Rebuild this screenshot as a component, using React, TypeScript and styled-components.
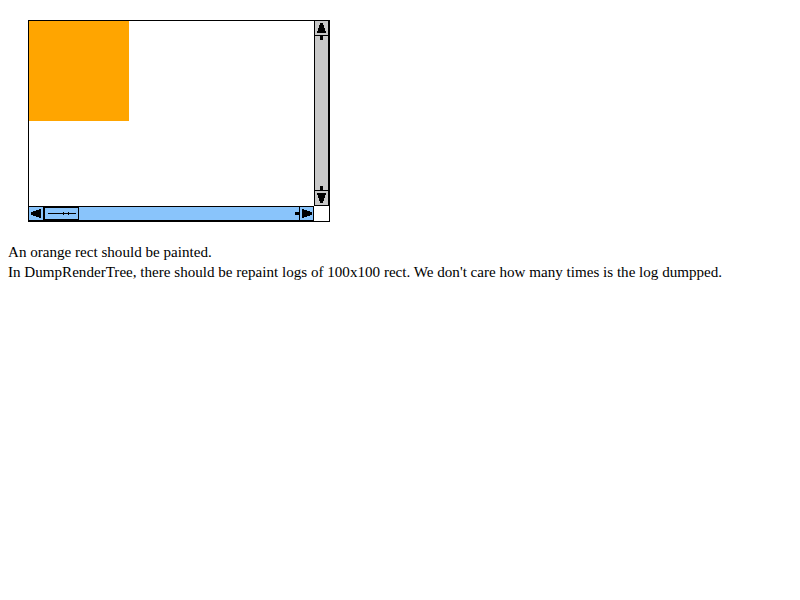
import React from 'react';
import styled, { createGlobalStyle } from 'styled-components';

const GlobalStyle = createGlobalStyle`
  body {
    margin: 0 8px 8px;
    background: #fff;
    font-family: 'Liberation Serif', 'Times New Roman', serif;
    font-size: 15.1px;
    color: #000;
  }
`;

const GREY = '#c8c8c8';
const BLUE = '#89c4fb';

const Frame = styled.div`
  display: grid;
  grid-template-columns: 285px 15px;
  grid-template-rows: 185px 15px;
  width: 300px;
  border: 1px solid #000;
  margin: 20px;
  background: #fff;
`;

const Viewport = styled.div`
  background: #fff;
  overflow: hidden;
`;

const OrangeRect = styled.div`
  width: 100px;
  height: 100px;
  background: orange;
`;

const VBar = styled.div`
  display: flex;
  flex-direction: column;
  align-items: center;
  box-sizing: border-box;
  border-left: 1px solid #000;
  border-right: 1px solid #000;
  border-bottom: 1px solid #000;
  background: ${GREY};
`;

const HBar = styled.div`
  display: flex;
  align-items: center;
  box-sizing: border-box;
  border-top: 1px solid #000;
  border-bottom: 1px solid #000;
  background: ${BLUE};
`;

const Corner = styled.div`
  background: #fff;
`;

const Spacer = styled.div`
  flex: 1;
`;

const Button = styled.div<{ $edge: 'top' | 'bottom' | 'left' | 'both' }>`
  display: flex;
  align-items: center;
  justify-content: center;
  box-sizing: border-box;
  flex: none;
  align-self: stretch;
  ${(p) => (p.$edge === 'top' || p.$edge === 'bottom' ? 'height: 15px;' : 'width: 15px;')}
  ${(p) => (p.$edge === 'bottom' ? 'border-bottom: 1px solid #000;' : '')}
  ${(p) => (p.$edge === 'top' ? 'border-top: 1px solid #000;' : '')}
  ${(p) => (p.$edge === 'left' ? 'border-right: 1px solid #000;' : '')}
  ${(p) => (p.$edge === 'both' ? 'border-left: 1px solid #000; border-right: 1px solid #000;' : '')}
  svg {
    display: block;
    shape-rendering: crispEdges;
  }
`;

const Stem = styled.div<{ $horizontal?: boolean }>`
  flex: none;
  background: #000;
  width: ${(p) => (p.$horizontal ? '4px' : '3px')};
  height: ${(p) => (p.$horizontal ? '3px' : '4px')};
`;

const Thumb = styled.div`
  flex: none;
  align-self: stretch;
  width: 35px;
  box-sizing: border-box;
  border: 1px solid #000;
  background: ${BLUE};
  display: flex;
  align-items: center;
  justify-content: center;
`;

const Grip = styled.div`
  position: relative;
  width: 28px;
  height: 1px;
  background: #000;

  &::before,
  &::after {
    content: '';
    position: absolute;
    top: -1px;
    width: 1px;
    height: 3px;
    background: #000;
  }
  &::before {
    left: 15px;
  }
  &::after {
    left: 20px;
  }
`;

const Text = styled.div`
  line-height: 20px;
`;

type Dir = 'up' | 'down' | 'left' | 'right';

const arrowPoints: Record<Dir, string> = {
  up: '3,0 6,0 9,10 0,10',
  down: '0,0 9,0 6,10 3,10',
  left: '0,3 0,6 10,9 10,0',
  right: '0,0 10,3 10,6 0,9',
};

function Arrow({ dir }: { dir: Dir }) {
  const vertical = dir === 'up' || dir === 'down';
  const w = vertical ? 9 : 10;
  const h = vertical ? 10 : 9;
  return (
    <svg width={w} height={h} viewBox={`0 0 ${w} ${h}`}>
      <polygon points={arrowPoints[dir]} fill="#000" />
    </svg>
  );
}

export default function App() {
  return (
    <>
      <GlobalStyle />
      <Frame>
        <Viewport>
          <OrangeRect />
        </Viewport>
        <VBar>
          <Button $edge="bottom">
            <Arrow dir="up" />
          </Button>
          <Stem />
          <Spacer />
          <Stem />
          <Button $edge="top">
            <Arrow dir="down" />
          </Button>
        </VBar>
        <HBar>
          <Button $edge="left">
            <Arrow dir="left" />
          </Button>
          <Thumb>
            <Grip />
          </Thumb>
          <Spacer />
          <Stem $horizontal />
          <Button $edge="both">
            <Arrow dir="right" />
          </Button>
        </HBar>
        <Corner />
      </Frame>
      <Text>
        An orange rect should be painted.
        <br />
        In DumpRenderTree, there should be repaint logs of 100x100 rect. We don't care how many times is the log dumpped.
      </Text>
    </>
  );
}
